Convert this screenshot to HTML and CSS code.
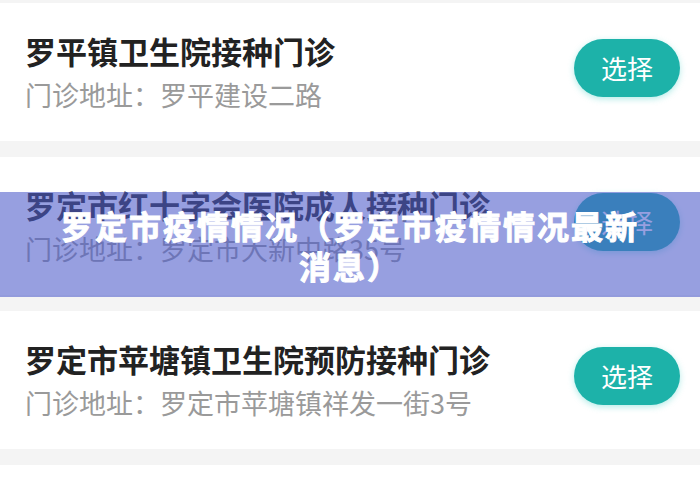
FILE: index.html
```html
<!DOCTYPE html>
<html lang="zh-CN">
<head>
    <meta charset="UTF-8">
    <title>罗定市疫情情况</title>
    <link rel="stylesheet" href="styles.css">
</head>
<body>
    <div class="clinic-list">
        <div class="clinic-card">
            <div class="clinic-info">
                <div class="clinic-name">罗平镇卫生院接种门诊</div>
                <div class="clinic-address">门诊地址：罗平建设二路</div>
            </div>
            <a href="#" class="select-button">选择</a>
        </div>
        <div class="clinic-card">
            <div class="clinic-info">
                <div class="clinic-name">罗定市红十字会医院成人接种门诊</div>
                <div class="clinic-address">门诊地址：罗定市大新中路35号</div>
            </div>
            <a href="#" class="select-button">选择</a>
        </div>
        <div class="clinic-card">
            <div class="clinic-info">
                <div class="clinic-name">罗定市苹塘镇卫生院预防接种门诊</div>
                <div class="clinic-address">门诊地址：罗定市苹塘镇祥发一街3号</div>
            </div>
            <a href="#" class="select-button">选择</a>
        </div>
        <div class="clinic-card clinic-card-cut"></div>
    </div>

    <div class="banner">
        <h1 class="banner-title">罗定市疫情情况（罗定市疫情情况最新消息）</h1>
    </div>
</body>
</html>
```

FILE: styles.css
```css
body {
    font-family: "Noto Sans CJK SC", "Noto Sans", sans-serif;
    margin: 0;
    background-color: #f4f4f4;
    position: relative;
    height: 490px;
    overflow: hidden;
}
.clinic-list {
    display: flex;
    flex-direction: column;
    gap: 16px;
    padding-top: 3px;
}
.clinic-card {
    background-color: #fff;
    height: 138px;
    box-sizing: border-box;
    padding: 27px 20px 28px 25px;
    display: flex;
    align-items: center;
    justify-content: space-between;
}
.clinic-card-cut {
    height: 25px;
}
.clinic-info {
    display: flex;
    flex-direction: column;
    gap: 6px;
}
.clinic-name {
    font-size: 31px;
    line-height: 40px;
    font-weight: 700;
    color: #222;
}
.clinic-address {
    font-size: 27px;
    line-height: 36px;
    color: #9a9a9a;
}
.select-button {
    display: flex;
    align-items: center;
    justify-content: center;
    width: 106px;
    height: 58px;
    margin-top: -8px;
    border-radius: 29px;
    background-color: #1db2a9;
    box-shadow: 0 2px 6px rgba(40, 200, 190, 0.35);
    color: #fff;
    font-size: 26px;
    text-decoration: none;
}
.banner {
    position: absolute;
    left: 0;
    right: 0;
    top: 192px;
    height: 105px;
    background-color: rgba(79, 91, 203, 0.59);
    display: flex;
    align-items: center;
    justify-content: center;
}
.banner-title {
    margin: 0;
    width: 600px;
    text-align: center;
    font-size: 32px;
    line-height: 40px;
    letter-spacing: 2px;
    font-weight: 700;
    color: #fff;
    -webkit-text-stroke: 1px #fff;
}
```
